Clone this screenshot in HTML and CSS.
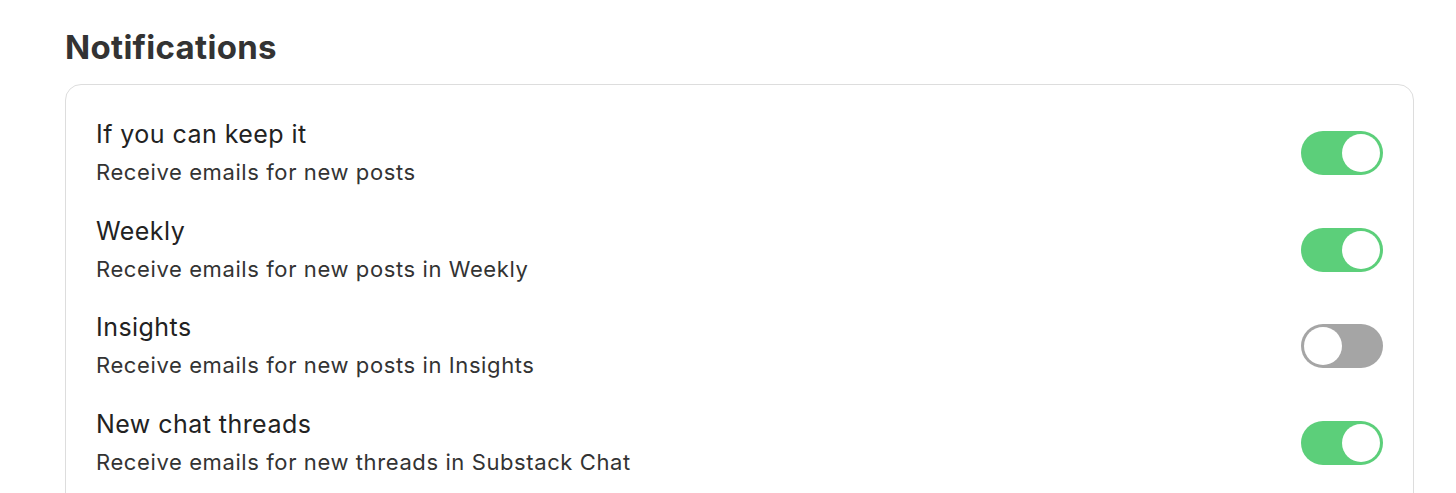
FILE: index.html
```html
<!DOCTYPE html>
<html lang="en">
<head>
    <meta charset="UTF-8">
    <title>Notifications</title>
    <link rel="stylesheet" href="styles.css">
</head>
<body>
    <div class="page">
        <h1>Notifications</h1>
        <div class="card">
            <div class="row">
                <div class="text">
                    <div class="title">If you can keep it</div>
                    <div class="desc">Receive emails for new posts</div>
                </div>
                <span class="toggle on"><span class="knob"></span></span>
            </div>
            <div class="row">
                <div class="text">
                    <div class="title">Weekly</div>
                    <div class="desc">Receive emails for new posts in Weekly</div>
                </div>
                <span class="toggle on"><span class="knob"></span></span>
            </div>
            <div class="row">
                <div class="text">
                    <div class="title">Insights</div>
                    <div class="desc">Receive emails for new posts in Insights</div>
                </div>
                <span class="toggle"><span class="knob"></span></span>
            </div>
            <div class="row">
                <div class="text">
                    <div class="title">New chat threads</div>
                    <div class="desc">Receive emails for new threads in Substack Chat</div>
                </div>
                <span class="toggle on"><span class="knob"></span></span>
            </div>
        </div>
    </div>
</body>
</html>
```

FILE: styles.css
```css
body {
    margin: 0;
    background-color: #fff;
    font-family: 'Inter', 'Open Sans', sans-serif;
    color: #222;
}

.page {
    padding: 27px 42px 0 65px;
}

h1 {
    margin: 0 0 17px 0;
    font-size: 33px;
    font-weight: 700;
    color: #333;
    letter-spacing: 0.3px;
    line-height: 40px;
}

.card {
    border: 1px solid #ddd;
    border-radius: 16px;
    padding: 20px 30px 0 30px;
    height: 600px;
}

.row {
    display: flex;
    align-items: center;
    justify-content: space-between;
    height: 96.5px;
}

.text {
    margin-bottom: 2px;
}

.title {
    font-size: 25px;
    line-height: 34px;
    color: #222;
    letter-spacing: 0.45px;
}

.desc {
    font-size: 22px;
    line-height: 30px;
    color: #333;
    margin-top: 6px;
    letter-spacing: 0.6px;
}

.toggle {
    display: flex;
    align-items: center;
    width: 82px;
    height: 44px;
    box-sizing: border-box;
    padding: 3px;
    border-radius: 22px;
    background-color: #a5a5a5;
}

.toggle.on {
    background-color: #5ccf7a;
    justify-content: flex-end;
}

.knob {
    width: 38px;
    height: 38px;
    border-radius: 50%;
    background-color: #fff;
}
```
